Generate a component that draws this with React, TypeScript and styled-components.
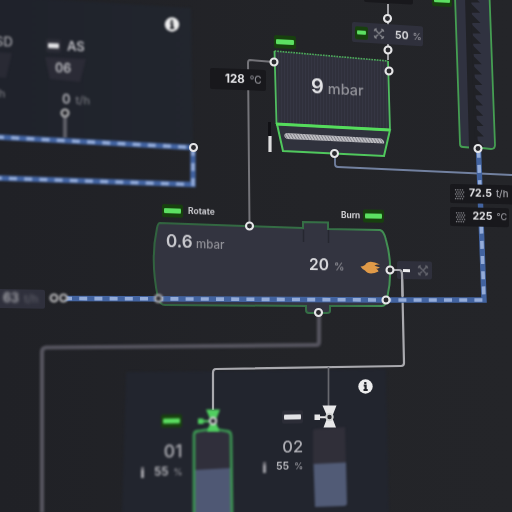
import React from 'react';
import styled, { createGlobalStyle } from 'styled-components';

const GlobalStyle = createGlobalStyle`
  body { margin: 0; background: #222327; overflow: hidden; }
`;

const Canvas = styled.main`
  position: relative;
  width: 512px;
  height: 512px;
  overflow: hidden;
  background: linear-gradient(90deg, #202126 0%, #232428 60%, #242529 100%);
  font-family: Inter, "Liberation Sans", sans-serif;
`;

const Diagram = styled.svg`
  position: absolute;
  inset: 0;
  display: block;
`;

/* A group of instruments pinned to a point of the plant map. */
const Pin = styled.section<{ $x: number; $y: number; $tilt?: number; $gap?: number; $row?: boolean; $align?: string }>`
  position: absolute;
  left: ${(p) => p.$x}px;
  top: ${(p) => p.$y}px;
  display: flex;
  flex-direction: ${(p) => (p.$row ? 'row' : 'column')};
  align-items: ${(p) => p.$align ?? (p.$row ? 'center' : 'flex-start')};
  gap: ${(p) => p.$gap ?? 0}px;
  transform-origin: 0 50%;
  transform: skewY(${(p) => p.$tilt ?? 2}deg);
`;

const Reading = styled.div<{ $blur?: number; $gap?: number }>`
  display: flex;
  align-items: baseline;
  gap: ${(p) => p.$gap ?? 5}px;
  line-height: 1;
  white-space: nowrap;
  filter: blur(${(p) => p.$blur ?? 0.35}px);
`;

const Value = styled.span<{ $size: number; $weight?: number; $color?: string }>`
  font-size: ${(p) => p.$size}px;
  font-weight: ${(p) => p.$weight ?? 600};
  color: ${(p) => p.$color ?? '#e4e4e7'};
`;

const Unit = styled.span<{ $size: number; $color?: string }>`
  font-size: ${(p) => p.$size}px;
  font-weight: 500;
  color: ${(p) => p.$color ?? '#929299'};
`;

const Tag = styled.div<{ $w: number; $tone: 'dark' | 'slate'; $pad?: number; $gap?: number; $h?: number }>`
  box-sizing: border-box;
  display: flex;
  align-items: center;
  gap: ${(p) => p.$gap ?? 0}px;
  width: ${(p) => p.$w}px;
  height: ${(p) => p.$h ?? 19}px;
  padding-left: ${(p) => p.$pad ?? 0}px;
  border-radius: 2px;
  background: ${(p) => (p.$tone === 'dark' ? '#18181c' : '#2f303c')};
`;

const TagIcon = styled.svg`
  flex: none;
  display: block;
  overflow: visible;
  filter: blur(0.35px);
`;

const Dash = styled.div`
  width: 7px;
  height: 3px;
  background: #ededee;
`;

const Lamp = styled.div<{ $w?: number; $on?: boolean; $blur?: number }>`
  flex: none;
  width: ${(p) => p.$w ?? 21}px;
  height: 13px;
  display: flex;
  align-items: center;
  justify-content: center;
  border-radius: 2px;
  background: ${(p) => (p.$on ? '#17400e' : '#2c2d37')};
  filter: blur(${(p) => p.$blur ?? 0.7}px);

  &::before {
    content: '';
    width: calc(100% - 4px);
    height: 4.5px;
    border-radius: 1px;
    background: ${(p) => (p.$on ? '#5ce062' : '#e2e2e5')};
  }
`;

const LevelRow = styled.div`
  display: flex;
  align-items: center;
`;

const LevelMark = styled.i`
  width: 3px;
  height: 11px;
  margin-right: 10px;
  background: linear-gradient(#707077 25%, #a2a2a8 25%);
  filter: blur(0.8px);
`;

const HeaderRow = styled.div`
  display: flex;
  align-items: center;
  gap: 6px;
`;

const HopperColumn = styled.div`
  width: 44px;
  display: flex;
  flex-direction: column;
  align-items: flex-start;
`;

const HopperCode = styled.div`
  padding: 10px 0 17px 9px;
`;

const HopperRate = styled.div`
  padding-left: 16px;
`;

const CylinderCode = styled.div`
  padding: 15px 0 6px;
`;

const FanReading = styled.div`
  padding: 2px 0 0 11px;
`;

const Node = ({ x, y, soft = false }: { x: number; y: number; soft?: boolean }) => (
  <circle cx={x} cy={y} r={3.5} fill="#29292e" stroke={soft ? '#b2b2b4' : '#e6e6e8'} strokeWidth={2.1} filter={soft ? 'url(#soft)' : 'url(#fine)'} />
);

const Flow = ({ d, blur = 'fine' }: { d: string; blur?: string }) => (
  <g fill="none" filter={`url(#${blur})`}>
    <path d={d} stroke="#4263a0" strokeWidth={5.4} />
    <path d={d} stroke="#94acd9" strokeWidth={3.6} strokeDasharray="8 7.2" />
  </g>
);

const Info = ({ x, y, blur }: { x: number; y: number; blur: string }) => (
  <g transform={`translate(${x} ${y})`} filter={`url(#${blur})`}>
    <circle r={7.2} fill="#ececed" />
    <path d="M-.2-4.6v2M-1.8-1h1.9v4.4M-2 3.500h4.2" stroke="#22242a" strokeWidth={2.2} fill="none" />
  </g>
);

const Fan = ({ color }: { color: string }) => (
  <TagIcon width="10" height="10" viewBox="-5 -5 10 10">
    <path
      d="M-3.500-3.500L3.500 3.500M3.500-3.500L-3.500 3.500M-4.600-2.200Q-4.500-4.500-2.200-4.600M4.600-2.200Q4.500-4.500 2.200-4.600M-4.600 2.200Q-4.500 4.500-2.200 4.600M4.600 2.200Q4.500 4.500 2.200 4.600"
      fill="none"
      stroke={color}
      strokeWidth="1.3"
    />
  </TagIcon>
);

const Grains = () => (
  <TagIcon width="9" height="10" viewBox="0 0 9 10">
    <g fill="#8b8b91">
      {[0, 1, 2, 3, 4].map((row) =>
        [0, 1, 2, 3].map((col) => (
          <circle key={`${row}${col}`} cx={0.6 + col * 2.3 + (row % 2) * 1.1} cy={0.7 + row * 2.2} r={0.75} />
        )),
      )}
    </g>
  </TagIcon>
);

const Valve = ({ x, y, color, blur }: { x: number; y: number; color: string; blur: string }) => (
  <g transform={`translate(${x} ${y})`} fill={color} filter={`url(#${blur})`}>
    <path d="M-7-11.500H7L2.500 0L6.500 10.500H-6L-2 0Z" />
    <path d="M-15-2.500h5.500v1.700H-3v2h-6.500v1.700H-15Z" />
    <circle r={3.200} fill="#29292e" stroke="#d2d4d4" strokeWidth={2} />
  </g>
);

const screwTeeth = Array.from({ length: 15 }, (_, i) => {
  const y = -7 + i * 10.3;
  const x = 470.4 + i * 0.3;
  return `M${x} ${y}l9.500 9.500h-9.500Z`;
}).join('');

const Drawing = () => (
  <Diagram width="512" height="512" viewBox="0 0 512 512" colorInterpolationFilters="sRGB">
    <defs>
      <filter id="fine" x="-20" y="-20" width="552" height="552" filterUnits="userSpaceOnUse"><feGaussianBlur stdDeviation="0.45" /></filter>
      <filter id="soft" x="-20" y="-20" width="552" height="552" filterUnits="userSpaceOnUse"><feGaussianBlur stdDeviation="0.9" /></filter>
      <filter id="haze" x="-20" y="-20" width="552" height="552" filterUnits="userSpaceOnUse"><feGaussianBlur stdDeviation="1.3" /></filter>
      <pattern id="ribs" width="3" height="6" patternUnits="userSpaceOnUse"><path d="M1 0V6" stroke="#292a34" strokeWidth="1" /></pattern>
      <pattern id="hatch" width="3" height="5" patternUnits="userSpaceOnUse"><path d="M0 0l3 5M-3 0l3 5M3 0l3 5" stroke="#6f7078" strokeWidth=".8" /></pattern>
      <linearGradient id="rim" x1="153" x2="392" y1="0" y2="0" gradientUnits="userSpaceOnUse">
        <stop offset="0" stopColor="#31633f" /><stop offset=".8" stopColor="#367247" /><stop offset="1" stopColor="#449455" />
      </linearGradient>
      <linearGradient id="panel" x1="0" x2="1"><stop offset="0" stopColor="#1f222b" /><stop offset="1" stopColor="#22262e" /></linearGradient>
    </defs>

    {/* background panels */}
    <path d="M-4-4L191 8L193 147L-4 137Z" fill="url(#panel)" filter="url(#soft)" />
    <path d="M126 372L386 369L389 516H122Z" fill="#22252e" filter="url(#haze)" />

    {/* hopper shapes */}
    <path d="M45 57L86 59L80 82L50 79Z" fill="#2b2b36" filter="url(#soft)" />
    <path d="M-4 52L12 53L6 78L-4 77Z" fill="#292a34" filter="url(#haze)" />

    {/* grey pipes */}
    <g fill="none" filter="url(#fine)">
      <path d="M274 62L250 60Q248 60 248 63L249.500 225" stroke="#747479" strokeWidth="2" />
      <path d="M388 4V60" stroke="#c5c5c9" strokeWidth="1.6" />
      <path d="M335 154V164Q335 167 338 167L512 175" stroke="#7281a0" strokeWidth="1.800" />
      <path d="M402 274L404 363Q404 366 401 366L216 369Q213 369 213 373V410" stroke="#a9a9ae" strokeWidth="2.200" />
      <path d="M328.500 367V407" stroke="#68696f" strokeWidth="1.700" />
    </g>
    <g fill="none" filter="url(#soft)">
      <path d="M65 116V138" stroke="#5d5d66" strokeWidth="4" />
      <path d="M319 315V342Q319 345 316 345L46 347.500Q42 348 42 352V513" stroke="#55545e" strokeWidth="4.200" />
    </g>

    {/* rotary drum */}
    <path d="M160 223L303 228V222L328 222.500V229L380 230Q384 231 386 240Q394 268 387 299Q386 306 382 306L330 306V311Q330 313 327 313H309Q306 313 306 310V306L165 305Q160 305 158 298Q150 260 157 228Q158 223 160 223Z" fill="#333440" stroke="url(#rim)" strokeWidth="2" filter="url(#fine)" />
    <path d="M303.500 230V242M328.500 230V243" stroke="#262730" strokeWidth="1.400" />
    <path d="M360.500 266.500Q365 266 366 263.500Q370 259.500 380 264.500Q376 264 374.500 265.800L380 267.500Q378 269 376 268.500Q378.500 270 378.500 271.500Q369 276 365 270.500Q362 269 360.500 266.500Z" fill="#e09a48" filter="url(#fine)" />

    {/* blue pipes */}
    <Flow d="M-4 137L193 147.500V184.500L-4 178" blur="soft" />
    <Flow d="M64 298.500L200 299L386 300H484L478.500 149" />

    {/* pressure vessel */}
    <g filter="url(#fine)">
      <path d="M274.500 51L388 61L390 130L276.500 124Z" fill="#353643" />
      <path d="M274.500 51L388 61L390 130L276.500 124Z" fill="url(#ribs)" />
      <path d="M277 124L390 130L384 156L283 151Z" fill="#30323d" stroke="#50c85d" strokeWidth="2" />
      <path d="M276.500 124L274.500 51M388 61L390 130" stroke="#50bc60" strokeWidth="1.800" />
      <path d="M274.500 51L388 61" stroke="#4dac5b" strokeWidth="1.600" strokeDasharray="1.7 1" />
      <path d="M276 124L390 130" stroke="#55dc5c" strokeWidth="3.200" />
      <path d="M286 133L381 138.500Q385 141 384 143.500L287 139Q282 136 286 133Z" fill="#bcbcc1" />
      <path d="M286 133L381 138.500Q385 141 384 143.500L287 139Q282 136 286 133Z" fill="url(#hatch)" />
      <path d="M269.500 122V136" stroke="#111115" strokeWidth="3" />
      <path d="M270 136V152" stroke="#dededf" strokeWidth="3.200" />
    </g>

    {/* screw conveyor */}
    <g filter="url(#fine)">
      <path d="M455-4L460 144Q460 147 463 147L491 149Q495 149 495 145L489.500-4Z" fill="#303240" />
      <path d="M465-4L469 148L478 148.500L471-4Z" fill="#202126" />
      <path d={screwTeeth} fill="#202126" />
      <path d="M455-4L460 144Q460 147 463 147L469 147.500M482 148L491 149Q495 149 495 145L489.500-4" fill="none" stroke="#459e52" strokeWidth="1.800" />
    </g>

    {/* gas cylinders */}
    <g filter="url(#soft)">
      <path d="M194 514V435Q194 431 199 431Q213 428 226 431Q231 431 231 436L232 514Z" fill="#302f3b" />
      <path d="M195 470L231 468L232 514H195Z" fill="#4f5874" />
      <path d="M194 514V435Q194 431 199 431Q213 428 226 431Q231 431 231 436L232 514" fill="none" stroke="#3b9251" strokeWidth="2.800" />
      <path d="M313 431Q313 429 316 429L345 427L346 464H313Z" fill="#302f39" />
      <path d="M313.500 464L346 462.500L347 504Q346 506 344 506L315 507Z" fill="#515b76" />
    </g>
    <Valve x={213} y={421} color="#51cf60" blur="soft" />
    <Valve x={329.5} y={417} color="#e8e8e9" blur="fine" />

    <Node x={65} y={113} soft />
    <Node x={193.5} y={147.5} />
    <Node x={249.5} y={226} />
    <Node x={158.5} y={298.5} soft />
    <Node x={54} y={298} soft />
    <Node x={63.5} y={298} soft />
    <Node x={386} y={300} />
    <Node x={318.5} y={312.5} />
    <Node x={274} y={62} />
    <Node x={387.5} y={18.5} />
    <Node x={388} y={50} />
    <Node x={389} y={71} />
    <Node x={334.5} y={153.5} />
    <Node x={478} y={148.5} />

    <Info x={172} y={24.5} blur="soft" />
    <Info x={365.5} y={386.5} blur="fine" />
  </Diagram>
);

/* The outlet pipe of the drum runs in front of the burner tag. */
const OutletPipe = () => (
  <Diagram width="512" height="512" viewBox="0 0 512 512">
    <path d="M393 270H399Q402 270 402 274L402.600 296" fill="none" stroke="#a9a9ae" strokeWidth="2.200" filter="url(#fine)" />
    <Node x={390} y={270} />
  </Diagram>
);

const Cylinder = ({ x, y, code, size, on, blur }: { x: number; y: number; code: string; size: number; on?: boolean; blur: number }) => (
  <Pin $x={x} $y={y} $tilt={-1} $align="flex-end">
    <Lamp $on={on} $blur={blur} />
    <CylinderCode>
      <Reading $blur={blur}>
        <Value $size={size} $weight={500} $color="#b0b0b6">{code}</Value>
      </Reading>
    </CylinderCode>
    <LevelRow>
      <LevelMark />
      <Reading $gap={5} $blur={blur}>
        <Value $size={size - 6} $color="#bebec3">55</Value>
        <Unit $size={9}>%</Unit>
      </Reading>
    </LevelRow>
  </Pin>
);

export default function App() {
  return (
    <>
      <GlobalStyle />
      <Canvas>
        <Drawing />

        <Pin $x={-5} $y={34.5}>
          <Reading $blur={1.3}><Value $size={13} $weight={500} $color="#a5a5ab">SD</Value></Reading>
        </Pin>
        <Pin $x={-9} $y={88}>
          <Reading $blur={1.2}><Unit $size={11} $color="#77787f">t/h</Unit></Reading>
        </Pin>
        <Pin $x={46} $y={38.5}>
          <HopperColumn>
            <HeaderRow>
              <Lamp $w={15} $blur={1.1} />
              <Reading $blur={1}><Value $size={13} $color="#bcbcc1">AS</Value></Reading>
            </HeaderRow>
            <HopperCode>
              <Reading $blur={1}><Value $size={12.5} $color="#bcbcc1">06</Value></Reading>
            </HopperCode>
            <HopperRate>
              <Reading $blur={0.9}><Value $size={13} $color="#b1b1b7">0</Value><Unit $size={11} $color="#77787f">t/h</Unit></Reading>
            </HopperRate>
          </HopperColumn>
        </Pin>

        <Pin $x={210} $y={68}>
          <Tag $w={56} $h={21} $tone="dark" $pad={15}>
            <Reading $blur={0.5}><Value $size={11.5} $weight={700}>128</Value><Unit $size={10}>°C</Unit></Reading>
          </Tag>
        </Pin>

        <Pin $x={274} $y={34.5} $tilt={3}><Lamp $w={22} $on /></Pin>
        <Pin $x={432} $y={-7.5} $tilt={3}><Lamp $w={20} $on /></Pin>
        <Pin $x={364} $y={-17.5} $tilt={3}><Tag $w={49} $tone="dark" /></Pin>
        <Pin $x={352} $y={22} $tilt={3.5}>
          <Tag $w={71} $h={20} $tone="slate" $pad={3}>
            <HeaderRow>
              <Lamp $w={13} $on $blur={0.5} />
              <Fan color="#85868c" />
            </HeaderRow>
            <FanReading>
              <Reading $gap={4}><Value $size={10.5}>50</Value><Unit $size={9}>%</Unit></Reading>
            </FanReading>
          </Tag>
        </Pin>

        <Pin $x={310.5} $y={75.5} $tilt={3}>
          <Reading $gap={4}><Value $size={20}>9</Value><Unit $size={14.5}>mbar</Unit></Reading>
        </Pin>

        <Pin $x={450} $y={184.2} $gap={4} $tilt={1.3}>
          <Tag $w={66} $tone="dark" $pad={5} $gap={5}>
            <Grains />
            <Reading $gap={4}><Value $size={10.5} $weight={700}>72.5</Value><Unit $size={9.5} $color="#a1a1a7">t/h</Unit></Reading>
          </Tag>
          <Tag $w={59} $tone="dark" $pad={5.5} $gap={8}>
            <Grains />
            <Reading $gap={4}><Value $size={10.5} $weight={700}>225</Value><Unit $size={9}>°C</Unit></Reading>
          </Tag>
        </Pin>

        <Pin $row $x={162} $y={203.5} $gap={5}>
          <Lamp $on />
          <Reading $blur={0.7}><Value $size={8.5} $weight={700} $color="#c4c4c9">Rotate</Value></Reading>
        </Pin>
        <Pin $row $x={340.5} $y={209.3} $gap={3} $tilt={1}>
          <Reading $blur={0.5}><Value $size={8.3} $weight={700} $color="#d0d0d4">Burn</Value></Reading>
          <Lamp $on />
        </Pin>

        <Pin $x={165.5} $y={232.8}>
          <Reading $blur={0.7} $gap={3.5}><Value $size={17} $color="#c8c8cd">0.6</Value><Unit $size={11.5}>mbar</Unit></Reading>
        </Pin>
        <Pin $x={309} $y={257} $tilt={1}>
          <Reading $blur={0.5}><Value $size={15.5} $color="#d9d9dd">20</Value><Unit $size={10.5}>%</Unit></Reading>
        </Pin>

        <Pin $x={397} $y={261} $tilt={1}>
          <Tag $w={35} $h={18} $tone="slate" $pad={6} $gap={8}>
            <Dash />
            <Fan color="#66676f" />
          </Tag>
        </Pin>

        <Pin $x={-4} $y={288.5} $tilt={1}>
          <Tag $w={49} $tone="slate" $pad={7}>
            <Reading $blur={1.4}><Value $size={12.5} $color="#afafb5">63</Value><Unit $size={11} $color="#5d5e68">t/h</Unit></Reading>
          </Tag>
        </Pin>

        <Cylinder x={140.5} y={414.5} code="01" size={17.5} on blur={0.9} />
        <Cylinder x={263} y={410.5} code="02" size={16.5} blur={0.7} />

        <OutletPipe />
      </Canvas>
    </>
  );
}
